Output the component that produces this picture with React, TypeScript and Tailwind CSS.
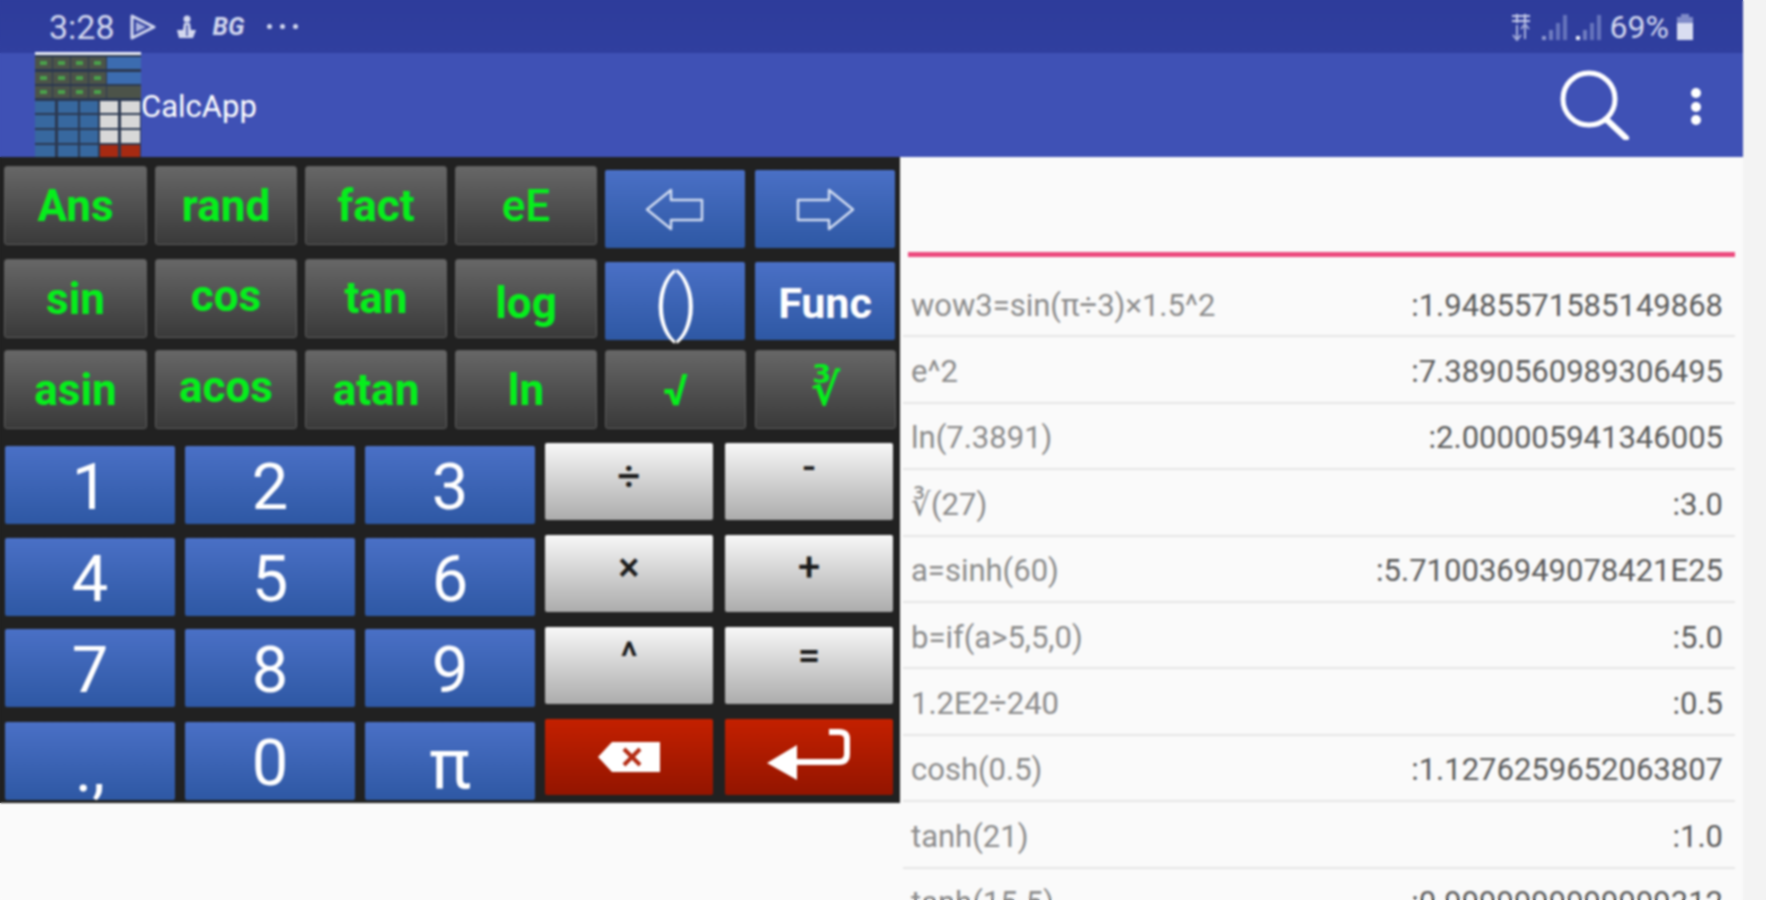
import React from "react";

const greyKey = "flex items-center justify-center rounded-[3px] border border-[#5e5e5e] bg-gradient-to-b from-[#676767] to-[#3a3a3a] h-[79px] font-bold text-[44px] leading-none text-[#06ee1c]";
const blueKey = "flex items-center justify-center rounded-[2px] bg-gradient-to-b from-[#4a70c6] to-[#2e58a4] text-white";
const numKey = blueKey + " w-[170px] h-[78px] text-[65px] leading-none pt-[4px]";
const whiteKey = "flex justify-center rounded-[2px] bg-gradient-to-b from-[#f8f8f8] to-[#acacac] w-[168px] h-[77px] text-[#1c1c1c] leading-none font-medium text-[40px]";
const redKey = "flex items-center justify-center rounded-[2px] bg-gradient-to-b from-[#c42000] to-[#931500] w-[168px] h-[76px]";

const rows = [
  ["wow3=sin(π÷3)×1.5^2", ":1.9485571585149868"],
  ["e^2", ":7.3890560989306495"],
  ["ln(7.3891)", ":2.000005941346005"],
  ["∛(27)", ":3.0"],
  ["a=sinh(60)", ":5.710036949078421E25"],
  ["b=if(a>5,5,0)", ":5.0"],
  ["1.2E2÷240", ":0.5"],
  ["cosh(0.5)", ":1.1276259652063807"],
  ["tanh(21)", ":1.0"],
  ["tanh(15.5)", ":0.9999999999999312"],
];

function Logo() {
  const topRows = [5, 20, 34];
  const topCols = [0, 18, 36, 54, 72, 89];
  const lowRows: [number, number][] = [[49, 12], [63, 13], [78, 13], [93, 12]];
  const lowCols: [number, number][] = [[0, 20], [23, 20], [45, 18], [65, 18], [86, 19]];
  return (
    <svg width="106" height="105" viewBox="0 0 106 105" className="shrink-0">
      <rect x="0" y="0" width="106" height="3" fill="#e8ecf6" />
      <rect x="0" y="3" width="106" height="102" fill="#2b3850" />
      {topRows.map((y, r) =>
        topCols.map((x, c) => (
          <g key={`${r}-${c}`}>
            <rect x={x} y={y} width="17" height="12" fill={c > 3 && r < 2 ? "#3c6cb0" : "#4c5349"} />
            {c < 4 && <rect x={x + 5} y={y + 4} width="7" height="4" fill="#4aa24a" />}
          </g>
        ))
      )}
      {lowRows.map(([y, h], r) =>
        lowCols.map(([x, w], c) => (
          <rect
            key={`l${r}-${c}`}
            x={x}
            y={y}
            width={w}
            height={h}
            fill={c < 3 ? "#37689f" : r === 3 ? "#a62a12" : "#d8d8d8"}
          />
        ))
      )}
    </svg>
  );
}

function LeftArrow() {
  return (
    <svg width="60" height="43" viewBox="0 0 60 43">
      <path d="M2 21.5 L26 2 V12 H57 V32 H26 V41 Z" fill="none" stroke="#cfdaf0" strokeWidth="2.5" strokeLinejoin="round" />
    </svg>
  );
}

function RightArrow() {
  return (
    <svg width="60" height="43" viewBox="0 0 60 43">
      <path d="M58 21.5 L34 2 V12 H3 V32 H34 V41 Z" fill="none" stroke="#cfdaf0" strokeWidth="2.5" strokeLinejoin="round" />
    </svg>
  );
}

function Signal({ dot }: { dot?: boolean }) {
  return (
    <svg width="26" height="28" viewBox="0 0 26 28">
      <rect x="0" y="23" width="4" height="4" fill={dot ? "#e4e8f6" : "#8f99cf"} />
      <rect x="7" y="17" width="4" height="10" fill="#6f7cc0" />
      <rect x="14" y="10" width="4" height="17" fill="#6674bc" />
      <rect x="21" y="2" width="4" height="25" fill="#6674bc" />
    </svg>
  );
}

export default function App() {
  return (
    <div className="relative flex w-[1766px] h-[900px] overflow-hidden bg-[#f3f3f3] [font-family:Roboto,sans-serif]">
      <div className="flex flex-col w-[1743px] shrink-0 bg-[#fafafa]">
        {/* status bar */}
        <div className="flex items-center h-[53px] shrink-0 bg-gradient-to-b from-[#2e3c9b] to-[#303f9f] text-[#d3d8ef]">
          <span className="ml-[49px] text-[34px] leading-none">3:28</span>
          <svg width="26" height="26" viewBox="0 0 26 26" className="ml-[15px]">
            <path d="M2 2 L24 13 L2 24 Z" fill="none" stroke="#d3d8ef" strokeWidth="3" strokeLinejoin="round" />
            <path d="M6 8 L16 13 L6 18 Z" fill="#aab3e0" />
          </svg>
          <svg width="24" height="26" viewBox="0 0 24 26" className="ml-[19px]">
            <circle cx="12" cy="5" r="3.5" fill="#d3d8ef" />
            <path d="M9 9 H15 L16 16 H21 L18 24 H4 L2 16 H8 Z" fill="#d3d8ef" />
            <path d="M12 11 V22" stroke="#3a489f" strokeWidth="1.5" />
          </svg>
          <span className="ml-[14px] text-[25px] leading-none font-bold italic">BG</span>
          <span className="ml-[22px] flex gap-[8px]">
            <span className="w-[5px] h-[5px] rounded-full bg-[#d3d8ef]" />
            <span className="w-[5px] h-[5px] rounded-full bg-[#d3d8ef]" />
            <span className="w-[5px] h-[5px] rounded-full bg-[#d3d8ef]" />
          </span>
          <div className="ml-auto flex items-center mr-[48px]">
            <svg width="22" height="28" viewBox="0 0 22 28" className="mr-[1px]">
              <path d="M7 12 V26 M15 12 V26 M3 22 L7 27 L11 22 M11 16 L15 11 L19 16" fill="none" stroke="#a5aedb" strokeWidth="2" />
              <path d="M2 3 H20 M2 8 H20 M7 1 V10 M15 1 V10" stroke="#c2c8e8" strokeWidth="2" />
            </svg>
            <span className="ml-[9px] flex"><Signal /></span>
            <span className="ml-[8px] flex"><Signal dot /></span>
            <span className="ml-[8px] text-[32px] leading-none">69%</span>
            <svg width="20" height="28" viewBox="0 0 20 28" className="ml-[6px]">
              <path d="M6 1 H14 V4 H18 V27 H2 V4 H6 Z" fill="#7f8ac8" />
              <rect x="2" y="10" width="16" height="17" fill="#d9ddf1" />
            </svg>
          </div>
        </div>

        {/* toolbar */}
        <div className="flex items-end h-[104px] shrink-0 bg-[#3f51b5] text-white">
          <div className="ml-[35px] flex"><Logo /></div>
          <span className="self-center mt-[3px] text-[31px] leading-none">CalcApp</span>
          <svg width="70" height="70" viewBox="0 0 70 70" className="ml-auto self-center mr-[61px]">
            <circle cx="29" cy="29" r="26" fill="none" stroke="#fff" strokeWidth="5" />
            <path d="M47 50 L66 68" stroke="#fff" strokeWidth="6" strokeLinecap="round" />
          </svg>
          <div className="self-center mt-[3px] mr-[42px] flex flex-col gap-[3.5px]">
            <span className="w-[10px] h-[10px] rounded-full bg-white" />
            <span className="w-[10px] h-[10px] rounded-full bg-white" />
            <span className="w-[10px] h-[10px] rounded-full bg-white" />
          </div>
        </div>

        {/* body */}
        <div className="flex flex-1 min-h-0">
          {/* keypad */}
          <div className="flex flex-col w-[900px] h-[646px] shrink-0 bg-[#212121] pt-[9px]">
            <div className="flex items-start gap-[8px] pl-[4px] h-[93px]">
              <div className={greyKey + " w-[143px]"}>Ans</div>
              <div className={greyKey + " w-[142px]"}>rand</div>
              <div className={greyKey + " w-[142px]"}>fact</div>
              <div className={greyKey + " w-[142px] font-medium"}>eE</div>
              <div className={blueKey + " w-[140px] h-[78px] mt-[4px]"}><LeftArrow /></div>
              <div className={blueKey + " w-[140px] h-[78px] mt-[4px] ml-[2px]"}><RightArrow /></div>
            </div>
            <div className="flex items-start gap-[8px] pl-[4px] h-[91px]">
              <div className={greyKey + " w-[143px]"}>sin</div>
              <div className={greyKey + " w-[142px] pb-[6px]"}>cos</div>
              <div className={greyKey + " w-[142px] pb-[2px]"}>tan</div>
              <div className={greyKey + " w-[142px] pt-[8px]"}>log</div>
              <div className={blueKey + " w-[140px] h-[78px] mt-[3px] text-[72px] leading-none tracking-[-2px] pt-[4px] font-light"}>()</div>
              <div className={blueKey + " w-[140px] h-[78px] mt-[3px] ml-[2px] text-[43px] leading-none font-bold pt-[4px]"}>Func</div>
            </div>
            <div className="flex items-start gap-[8px] pl-[4px] h-[93px]">
              <div className={greyKey + " w-[143px]"}>asin</div>
              <div className={greyKey + " w-[142px] pb-[6px]"}>acos</div>
              <div className={greyKey + " w-[142px]"}>atan</div>
              <div className={greyKey + " w-[142px]"}>ln</div>
              <div className={greyKey + " w-[141px] text-[40px]"}>√</div>
              <div className={greyKey + " w-[141px] ml-[1px] [font-family:'DejaVu_Sans',sans-serif] text-[34px]"}>∛</div>
            </div>

            <div className="flex items-start pl-[5px] h-[92px]">
              <div className="flex items-start gap-[10px] mt-[3px]">
                <div className={numKey}>1</div>
                <div className={numKey}>2</div>
                <div className={numKey}>3</div>
              </div>
              <div className={whiteKey + " ml-[10px] pt-[14px]"}>÷</div>
              <div className={whiteKey + " ml-[12px] pt-[5px]"}>-</div>
            </div>
            <div className="flex items-start pl-[5px] h-[92px]">
              <div className="flex items-start gap-[10px] mt-[3px]">
                <div className={numKey}>4</div>
                <div className={numKey}>5</div>
                <div className={numKey}>6</div>
              </div>
              <div className={whiteKey + " ml-[10px] pt-[13px]"}>×</div>
              <div className={whiteKey + " ml-[12px] pt-[13px]"}>+</div>
            </div>
            <div className="flex items-start pl-[5px] h-[92px]">
              <div className="flex items-start gap-[10px] mt-[2px]">
                <div className={numKey}>7</div>
                <div className={numKey}>8</div>
                <div className={numKey}>9</div>
              </div>
              <div className={whiteKey + " ml-[10px] pt-[11px]"}>^</div>
              <div className={whiteKey + " ml-[12px] pt-[9px]"}>=</div>
            </div>
            <div className="flex items-start pl-[5px] h-[84px]">
              <div className="flex items-start gap-[10px] mt-[3px]">
                <div className={numKey + " pt-[16px] text-[44px]"}>.,</div>
                <div className={numKey}>0</div>
                <div className={numKey + " pt-[6px] text-[70px]"}>π</div>
              </div>
              <div className={redKey + " ml-[10px]"}>
                <svg width="62" height="30" viewBox="0 0 62 30">
                  <path d="M0 15 L14 0 H62 V30 H14 Z" fill="#fff" />
                  <path d="M26 7 L42 23 M42 7 L26 23" stroke="#b32a12" strokeWidth="4" />
                </svg>
              </div>
              <div className={redKey + " ml-[12px] pt-[8px]"}>
                <svg width="84" height="64" viewBox="0 0 84 64">
                  <path d="M0 34 L30 16 V51 Z" fill="#fff" />
                  <path d="M28 33 H72 Q80 33 80 25 V10 Q80 3 72 3 H62" fill="none" stroke="#fff" strokeWidth="6" />
                </svg>
              </div>
            </div>
          </div>

          {/* history */}
          <div className="flex flex-col flex-1 min-w-0 overflow-hidden">
            <div className="h-[95px] shrink-0" />
            <div className="h-[5px] shrink-0 ml-[8px] mr-[8px] bg-[#ec4a7e]" />
            <div className="h-[14px] shrink-0" />
            {rows.map(([a, b]) => (
              <div key={a} className="flex items-center justify-between shrink-0 h-[66.4px] ml-[3px] mr-[8px] pl-[8px] pr-[12px] pt-[4px] border-b-2 border-[#e6e6e6] text-[31px] leading-none whitespace-nowrap">
                <span className="text-[#8c8c8c]">{a}</span>
                <span className="text-[#5c5c5c]">{b}</span>
              </div>
            ))}
          </div>
        </div>
      </div>
      {/* soft overlay: the reference is an upscaled, slightly blurred capture */}
      <div className="absolute inset-0 pointer-events-none backdrop-blur-[1px]" />
    </div>
  );
}
